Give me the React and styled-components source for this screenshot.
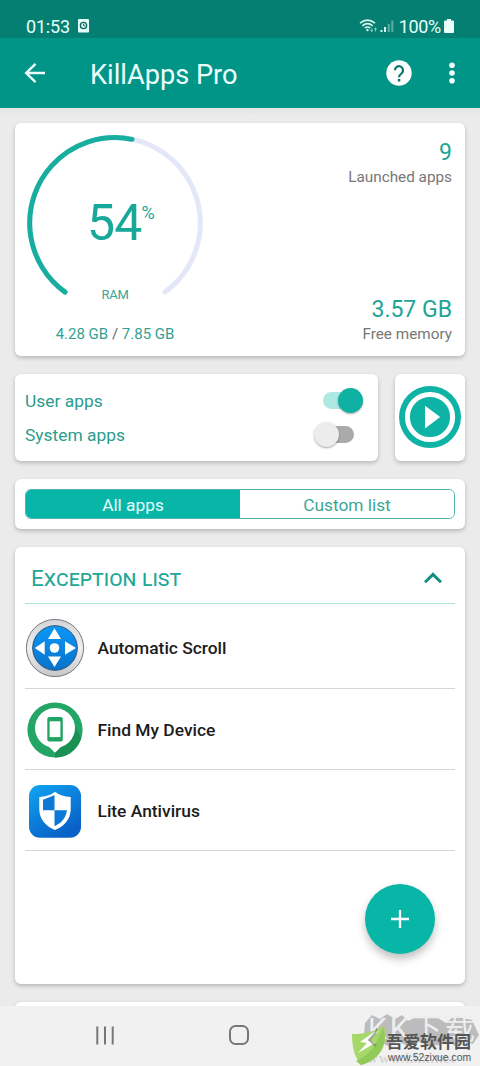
import React, { useState } from 'react';
import styled, { createGlobalStyle } from 'styled-components';

const apps = [
  { id: 1, name: 'Automatic Scroll', icon: 'scroll' },
  { id: 2, name: 'Find My Device', icon: 'device' },
  { id: 3, name: 'Lite Antivirus', icon: 'shield' },
];

const Gauge = ({ value }) => {
  const length = 288;
  return (
    <StGauge>
      <svg width="180" height="180" viewBox="0 0 180 180" fill="none" strokeWidth="5" strokeLinecap="round">
        <path d="M139.9 159.1A85.3 85.3 0 1 0 40.1 159.1" stroke="#e3e7f8" />
        <path
          d="M40.1 159.1A85.3 85.3 0 1 1 139.9 159.1"
          stroke="#17ae9f"
          pathLength={length}
          strokeDasharray={`${(length * value) / 100} 999`}
        />
      </svg>
      <StPercent>
        <StNumber>{value}</StNumber>
        <StSign>%</StSign>
      </StPercent>
      <StRam>RAM</StRam>
    </StGauge>
  );
};

const ScrollIcon = () => (
  <svg width="60" height="60" viewBox="0 0 60 60">
    <defs>
      <linearGradient id="rim" x1="0" y1="0" x2="0" y2="1">
        <stop offset="0" stopColor="#d2d4d7" />
        <stop offset="0.5" stopColor="#f0f0f1" />
        <stop offset="1" stopColor="#c5c7c9" />
      </linearGradient>
      <linearGradient id="disc" x1="0" y1="0" x2="0" y2="1">
        <stop offset="0" stopColor="#0b98f7" />
        <stop offset="1" stopColor="#0873ca" />
      </linearGradient>
    </defs>
    <circle cx="30" cy="30" r="28.6" fill="url(#rim)" stroke="#77797b" strokeWidth="1" />
    <circle cx="30" cy="30" r="22.3" fill="url(#disc)" stroke="#2d5379" strokeWidth="1" />
    <circle cx="29.5" cy="30" r="4.8" fill="#fff" />
    <path d="M29.5 10.3L36 21H23zM29.5 49L36 38.5H23zM9.8 30L19.7 23.3V36.7zM51 30L40 23.3V36.7z" fill="#fff" />
  </svg>
);

const DeviceIcon = () => (
  <svg width="60" height="60" viewBox="0 0 60 60">
    <circle cx="30" cy="30" r="27.6" fill="#23a565" />
    <path d="M44.5 15.5L56.3 38A27.6 27.6 0 0 1 30 57.6V52z" fill="#1b9055" />
    <path d="M30 52.7L24.4 47.2A20 20 0 1 1 35.6 47.2z" fill="#fff" />
    <rect x="22.3" y="17" width="15.5" height="24.5" rx="2" fill="#21a463" />
    <rect x="24.6" y="21.3" width="10.8" height="15.8" fill="#fff" />
  </svg>
);

const ShieldIcon = () => (
  <svg width="60" height="60" viewBox="0 0 60 60">
    <defs>
      <linearGradient id="tile" x1="0" y1="0" x2="0.6" y2="1">
        <stop offset="0" stopColor="#10a5f2" />
        <stop offset="1" stopColor="#0960c6" />
      </linearGradient>
      <clipPath id="inner">
        <path d="M30 14L42 18.8V27C42 36 37 41.5 30 45C23 41.5 18 36 18 27V18.8z" />
      </clipPath>
    </defs>
    <rect x="4" y="4" width="52" height="52.8" rx="11" fill="url(#tile)" />
    <path d="M30 10.7C34 14 39.5 15.6 45.7 16V28C45.7 38.5 39 45.3 30 49C21 45.3 14.3 38.5 14.3 28V16C20.5 15.6 26 14 30 10.7z" fill="#fff" />
    <path d="M18 14H29.5V29.3H18zM29.5 29.3H42V46H29.5z" fill="#0d79d6" clipPath="url(#inner)" />
  </svg>
);

const icons = { scroll: ScrollIcon, device: DeviceIcon, shield: ShieldIcon };

const Watermark = () => (
  <StWatermark>
    <StBackMark>
      <svg width="116" height="44" viewBox="0 0 116 44" fill="#bcbcbc">
        <path d="M1 10L8 2L16 6L23 1L31 6L38 2L44 8L50 5L60 4L74 5L82 10L90 3L98 5L108 7L115 22L109 31L99 28L91 33L84 28L76 32L64 33L53 28L43 33L34 28L24 33L12 27L3 31L0 22z" />
      </svg>
      <StBackText>KK下载</StBackText>
      <StBackUrl>www.kkx.net</StBackUrl>
    </StBackMark>
    <StLeaf>
      <svg width="36" height="41" viewBox="0 0 36 41">
        <path d="M0 9C10 9 20 8 32 1C36 15 31 34 9 40C2 31 0 21 0 9z" fill="#a6d869" />
        <path d="M4 36C17 31 25 20 31 2C36 16 31 34 9 40z" fill="#91ca59" />
        <path d="M22 7L8 17L15 18L6 28L23 18L17 15L27 6z" fill="#fff" />
        <path d="M25 3C25 7 22 10 17 15L24 21" fill="none" stroke="#777" strokeWidth="2" opacity="0.6" />
      </svg>
    </StLeaf>
    <StSiteName>吾爱软件园</StSiteName>
    <StSiteUrl>www.52zixue.com</StSiteUrl>
  </StWatermark>
);

const App = () => {
  const [userApps, setUserApps] = useState(true);
  const [systemApps, setSystemApps] = useState(false);
  const [tab, setTab] = useState('all');

  return (
    <StPage>
      <GlobalStyle />
      <StStatusBar>
        <StClock>01:53</StClock>
        <svg width="11" height="14" viewBox="0 0 11 14">
          <rect width="11" height="13.5" rx="1" fill="#e3fffb" />
          <circle cx="5.5" cy="6.5" r="3.1" fill="none" stroke="#14655e" strokeWidth="1.4" />
          <path d="M5.5 4.7V6.7H7" fill="none" stroke="#14655e" />
        </svg>
        <StSignals>
          <svg width="36" height="15" viewBox="0 0 36 15" fill="none" stroke="#d9f5f1">
            <path d="M1 4.2Q8.5 -2 16 4.2M3.3 6.8Q8.5 2.5 13.7 6.8M5.7 9Q8.5 7 11.3 9" strokeWidth="1.5" />
            <circle cx="8.5" cy="11" r="1.2" fill="#d9f5f1" stroke="none" />
            <path d="M12.7 9V12.5M11.3 11L12.7 12.5L14 11M16.5 12.5V9M15.1 10.3L16.5 9L17.9 10.3" strokeWidth="0.9" opacity="0.65" />
            <path d="M22.5 11V13M26 8V13" strokeWidth="2" />
            <path d="M29.8 5V13M33.3 1.5V13" strokeWidth="2" opacity="0.4" />
          </svg>
          <StBattery>100%</StBattery>
          <svg width="10" height="14" viewBox="0 0 10 14">
            <path d="M3 0H7V1.5H9Q10 1.5 10 2.5V13Q10 14 9 14H1Q0 14 0 13V2.5Q0 1.5 1 1.5H3z" fill="#e8fffc" />
          </svg>
        </StSignals>
      </StStatusBar>

      <StAppBar>
        <svg width="22" height="22" viewBox="0 0 22 22" fill="none" stroke="#ecfffc" strokeWidth="2.4">
          <path d="M21 11H2.5M11.5 1.8L2.2 11L11.5 20.2" />
        </svg>
        <StTitle>KillApps Pro</StTitle>
        <svg width="26" height="26" viewBox="0 0 26 26">
          <circle cx="13" cy="13" r="12.7" fill="#fff" />
          <path d="M9 10.3A4 4 0 1 1 15.9 13Q13 15.3 13 17.3" fill="none" stroke="#08776e" strokeWidth="2.2" />
          <rect x="11.8" y="19" width="2.5" height="2.5" fill="#08776e" />
        </svg>
        <StDots>
          <svg width="6" height="22" viewBox="0 0 6 22" fill="#f2fffd">
            <circle cx="3" cy="3.2" r="2.8" />
            <circle cx="3" cy="11" r="2.8" />
            <circle cx="3" cy="18.7" r="2.8" />
          </svg>
        </StDots>
      </StAppBar>

      <StContent>
        <StMemoryCard>
          <StRamSide>
            <Gauge value={54} />
            <StUsage>4.28 GB <i>/</i> 7.85 GB</StUsage>
          </StRamSide>
          <StStats>
            <div>
              <StStatValue>9</StStatValue>
              <StStatLabel>Launched apps</StStatLabel>
            </div>
            <div>
              <StStatValue>3.57 GB</StStatValue>
              <StStatLabel>Free memory</StStatLabel>
            </div>
          </StStats>
        </StMemoryCard>

        <StControls>
          <StSwitchCard>
            <StSwitchRow>
              <span>User apps</span>
              <StSwitch $on={userApps} onClick={() => setUserApps(!userApps)} />
            </StSwitchRow>
            <StSwitchRow>
              <span>System apps</span>
              <StSwitch $on={systemApps} onClick={() => setSystemApps(!systemApps)} />
            </StSwitchRow>
          </StSwitchCard>
          <StPlayCard>
            <svg width="62" height="62" viewBox="0 0 62 62">
              <circle cx="31" cy="31" r="31" fill="#0fb3a5" />
              <circle cx="31" cy="31" r="22.6" fill="none" stroke="#fff" strokeWidth="5" />
              <path d="M26 19.8L41.2 31L26 42.5z" fill="#fff" />
            </svg>
          </StPlayCard>
        </StControls>

        <StTabCard>
          <StTabs>
            <StTab $active={tab === 'all'} onClick={() => setTab('all')}>All apps</StTab>
            <StTab $active={tab === 'custom'} onClick={() => setTab('custom')}>Custom list</StTab>
          </StTabs>
        </StTabCard>

        <StListCard>
          <StListHead>
            <StListTitle>Exception list</StListTitle>
            <svg width="18" height="12" viewBox="0 0 18 12" fill="none" stroke="#108f82" strokeWidth="3">
              <path d="M1 10.3L9 2.4L17 10.3" />
            </svg>
          </StListHead>
          {apps.map((app) => {
            const Icon = icons[app.icon];
            return (
              <StRow key={app.id} $first={app.id === 1}>
                <Icon />
                <StName>{app.name}</StName>
              </StRow>
            );
          })}
          <StFab>
            <svg width="18" height="18" viewBox="0 0 18 18" stroke="#fff" strokeWidth="2.3">
              <path d="M9 0V18M0 9H18" />
            </svg>
          </StFab>
        </StListCard>
        <StNextCard />
      </StContent>

      <StNavBar>
        <svg width="18" height="19" viewBox="0 0 18 19" stroke="#777" strokeWidth="2">
          <path d="M1.3 0.5V18.5M9 0.5V18.5M16.7 0.5V18.5" />
        </svg>
        <svg width="20" height="20" viewBox="0 0 20 20" fill="none" stroke="#777" strokeWidth="2">
          <rect x="1" y="1" width="18" height="18" rx="5.5" />
        </svg>
      </StNavBar>
      <Watermark />
    </StPage>
  );
};

export default App;

const GlobalStyle = createGlobalStyle`
  * {
    box-sizing: border-box;
  }
  body {
    margin: 0;
    font-family: Roboto, "Noto Sans CJK SC", sans-serif;
  }
  svg {
    display: block;
    flex-shrink: 0;
  }
  button {
    font-family: inherit;
    border: none;
    padding: 0;
  }
`;

const StPage = styled.div`
  position: relative;
  display: flex;
  flex-direction: column;
  width: 480px;
  height: 1066px;
  overflow: hidden;
  background-color: #ebebeb;
`;

const StStatusBar = styled.div`
  display: flex;
  align-items: center;
  height: 38px;
  padding: 14px 26px 0;
  gap: 8px;
  color: #e3fffb;
  background-color: #067f73;
`;

const StClock = styled.span`
  font-size: 18px;
  letter-spacing: -0.2px;
`;

const StSignals = styled.div`
  display: flex;
  align-items: center;
  margin-left: auto;
`;

const StBattery = styled.span`
  font-size: 18px;
  margin: 0 3px 0 4px;
  letter-spacing: -0.3px;
`;

const StAppBar = styled.header`
  display: flex;
  align-items: center;
  height: 70px;
  padding: 0 25px 0 24px;
  background-color: #019587;
`;

const StTitle = styled.h1`
  flex: 1;
  margin: 3px 0 0 44px;
  font-size: 27.2px;
  font-weight: 400;
  color: #ecfffc;
`;

const StDots = styled.div`
  margin-left: 37px;
`;

const StContent = styled.main`
  flex: 1;
  min-height: 0;
  overflow: hidden;
  padding: 15px 15px 0;
  background: linear-gradient(#e0e6e5, #ebebeb 8px);
`;

const StCard = styled.section`
  background-color: #fff;
  border-radius: 6px;
  box-shadow: 0 2px 4px rgba(0, 0, 0, 0.22);
`;

const StMemoryCard = styled(StCard)`
  display: flex;
  justify-content: space-between;
  height: 233px;
  padding: 10px 13px 0 10px;
`;

const StRamSide = styled.div`
  width: 180px;
`;

const StGauge = styled.div`
  position: relative;
  height: 180px;
  color: #17a899;
`;

const StPercent = styled.div`
  position: absolute;
  top: 61px;
  left: 62px;
  display: flex;
`;

const StNumber = styled.span`
  font-size: 50px;
  line-height: 58px;
  letter-spacing: -0.8px;
`;

const StSign = styled.span`
  font-size: 18px;
  line-height: 38px;
`;

const StRam = styled.div`
  position: absolute;
  top: 154px;
  width: 100%;
  text-align: center;
  font-size: 13px;
  line-height: 16px;
  letter-spacing: -0.3px;
  color: #3ca598;
`;

const StUsage = styled.div`
  margin-top: 11px;
  text-align: center;
  font-size: 15px;
  line-height: 20px;
  color: #359f93;
  i {
    font-style: normal;
    color: #666;
  }
`;

const StStats = styled.div`
  display: flex;
  flex-direction: column;
  justify-content: space-between;
  padding: 5px 0 12px;
  text-align: right;
`;

const StStatValue = styled.div`
  font-size: 23px;
  line-height: 30px;
  height: 29px;
  color: #1ba596;
`;

const StStatLabel = styled.div`
  font-size: 15.3px;
  line-height: 20px;
  color: #777;
`;

const StControls = styled.div`
  display: flex;
  gap: 17px;
  margin-top: 18px;
  height: 87px;
`;

const StSwitchCard = styled(StCard)`
  flex: 1;
  padding: 10px 15px 0 10px;
`;

const StSwitchRow = styled.div`
  display: flex;
  align-items: center;
  justify-content: space-between;
  height: 34px;
  font-size: 17.4px;
  color: #2b9c8d;
`;

const StSwitch = styled.button`
  position: relative;
  top: -1px;
  width: 31px;
  height: 17px;
  margin-right: 9px;
  border-radius: 9px;
  background-color: ${(props) => (props.$on ? '#ade9e2' : '#aaa')};
  &::after {
    content: '';
    position: absolute;
    top: -4px;
    left: ${(props) => (props.$on ? '15px' : '-9px')};
    width: 25px;
    height: 25px;
    border-radius: 50%;
    background-color: ${(props) => (props.$on ? '#0fb1a2' : '#ececec')};
    box-shadow: 0 1px 2px rgba(0, 0, 0, 0.35);
  }
`;

const StPlayCard = styled(StCard)`
  display: flex;
  justify-content: center;
  width: 70px;
  padding-top: 12px;
`;

const StTabCard = styled(StCard)`
  height: 50px;
  margin-top: 18px;
  padding: 10px;
`;

const StTabs = styled.div`
  display: flex;
  height: 30px;
  border: 1px solid #52b5a9;
  border-radius: 6px;
  overflow: hidden;
`;

const StTab = styled.button`
  flex: 1;
  font-size: 17.3px;
  line-height: 31px;
  color: ${(props) => (props.$active ? '#e6fffc' : '#3ba797')};
  background-color: ${(props) => (props.$active ? '#08b6a8' : '#fff')};
`;

const StListCard = styled(StCard)`
  position: relative;
  height: 437px;
  margin-top: 18px;
  padding: 0 10px;
`;

const StListHead = styled.div`
  display: flex;
  align-items: center;
  justify-content: space-between;
  height: 57px;
  padding: 6px 13px 0 6px;
  border-bottom: 1px solid #aee3dc;
`;

const StListTitle = styled.h2`
  margin: 1px 0 0;
  font-size: 22.6px;
  font-weight: 400;
  font-variant: small-caps;
  color: #22a797;
`;

const StRow = styled.div`
  display: flex;
  align-items: center;
  gap: 12.5px;
  height: ${(props) => (props.$first ? '85px' : '81px')};
  padding-top: ${(props) => (props.$first ? '3px' : '1px')};
  border-bottom: 1px solid #d6d6d6;
`;

const StName = styled.span`
  font-size: 17.4px;
  font-weight: 500;
  padding-top: 1px;
  color: #1c1c1c;
`;

const StFab = styled.button`
  position: absolute;
  right: 30px;
  bottom: 30px;
  display: flex;
  align-items: center;
  justify-content: center;
  width: 70px;
  height: 70px;
  border-radius: 50%;
  background-color: #08b6a8;
  box-shadow: 0 5px 9px rgba(0, 0, 0, 0.25);
`;

const StNextCard = styled(StCard)`
  height: 40px;
  margin-top: 18px;
`;

const StNavBar = styled.nav`
  display: flex;
  align-items: center;
  gap: 115px;
  height: 60px;
  padding: 0 0 2px 96px;
  background-color: #f1f1f1;
`;

const StWatermark = styled.div`
  position: absolute;
  right: 0;
  bottom: 0;
  width: 130px;
  height: 56px;
  white-space: nowrap;
`;

const StBackMark = styled.div`
  position: absolute;
  top: 3px;
  left: 14px;
`;

const StBackText = styled.div`
  position: absolute;
  top: -2px;
  left: 4px;
  font-size: 30px;
  line-height: 36px;
  letter-spacing: 3px;
  color: #eee;
`;

const StBackUrl = styled.div`
  position: absolute;
  top: 37px;
  left: 3px;
  font-family: "Liberation Serif", serif;
  font-size: 15px;
  line-height: 17px;
  letter-spacing: 0.8px;
  color: #cfcfcf;
`;

const StLeaf = styled.div`
  position: absolute;
  top: 15px;
  left: 2px;
`;

const StSiteName = styled.div`
  position: absolute;
  top: 22px;
  left: 36px;
  font-size: 17px;
  line-height: 20px;
  font-weight: 700;
  color: #555;
`;

const StSiteUrl = styled.div`
  position: absolute;
  top: 41px;
  left: 38px;
  font-family: "Liberation Sans", sans-serif;
  font-size: 10.4px;
  line-height: 13px;
  color: #555;
`;
